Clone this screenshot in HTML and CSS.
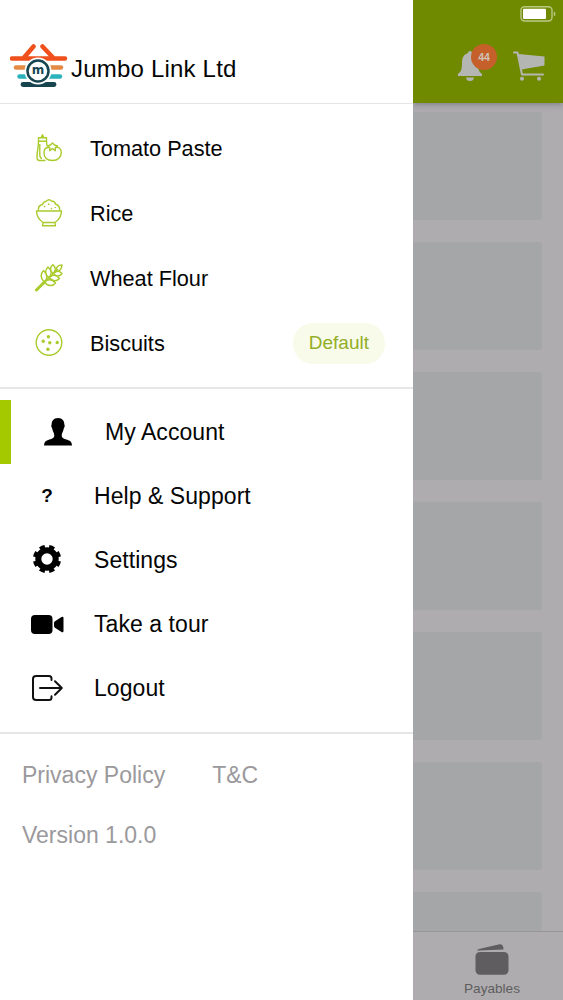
FILE: index.html
```html
<!DOCTYPE html>
<html lang="en">

<head>
    <meta charset="UTF-8">
    <meta name="viewport" content="width=device-width, initial-scale=1.0">
    <title>Jumbo Link Ltd</title>
    <link rel="stylesheet" href="styles.css">
</head>

<body>
    <div class="app">
        <!-- Side menu -->
        <aside class="drawer">
            <header class="drawer-header">
                <svg class="logo" width="58" height="46" viewBox="0 0 58 46" fill="none" stroke-linecap="round">
                    <path d="M2 15.500H55M14.500 14L23.500 3.500M42.500 14L32.500 3.500" stroke="#f0501c" stroke-width="4.500" />
                    <path d="M6 24.500H51" stroke="#e58a45" stroke-width="4.500" />
                    <path d="M9.500 33.500H50" stroke="#2bb3bd" stroke-width="4.500" />
                    <path d="M13 41.500H44" stroke="#164550" stroke-width="4.800" />
                    <circle cx="28" cy="28" r="13.500" fill="#fff" />
                    <circle cx="28" cy="28" r="10.500" fill="#fff" stroke="#164550" stroke-width="2.500" />
                    <text class="logo-letter" x="28" y="31" text-anchor="middle">m</text>
                </svg>
                <h1>Jumbo Link Ltd</h1>
            </header>

            <!-- Product categories -->
            <ul class="categories">
                <li>
                    <svg width="28" height="28" viewBox="0 0 28 28">
                        <path d="M6.300 3.500L7.500 .8L8.700 3.500M3.500 3.700H11.500V7.200H3.500ZM3.500 7.200C3.500 14 2 16 2 23.500Q2 26.500 4.500 26.500H10.500M11.500 7.200L12 12M4.800 10V21Q4.800 24 7 24.500" />
                        <path d="M14 13.500C10.500 13 9 15.500 9 18.500C9 23.500 12 26.500 17.500 26.500C23 26.500 26.300 23 26.300 18.500C26.300 14.500 23.500 13 21 13.500" />
                        <path d="M17.500 14.500L14.800 16.800V13.800L12.500 12L15.500 11L17.500 9L19.500 11L22.500 12L20.300 13.800V16.800Z" />
                    </svg>
                    <span>Tomato Paste</span>
                </li>
                <li>
                    <svg width="28" height="28" viewBox="0 0 28 28">
                        <path d="M1 12H27M1.500 12C1.500 18 4.500 21 8 23.500H20C23.500 21 26.500 18 26.500 12M8 24L7.500 26.800H20.500L20 24" />
                        <path d="M3.500 11.500C3 8 5 6 7.500 5.500C8 3 10 2.500 11.500 2C13 .5 15 .5 16.500 2C18.500 2 20 3 20.500 5C23.500 6 25 8 24.500 11.500" />
                        <path d="M9 8L10 7M13 5L14.500 5.500M16 9L17 10M20 8L20.500 9" />
                    </svg>
                    <span>Rice</span>
                </li>
                <li>
                    <svg width="28" height="28" viewBox="0 0 28 28">
                        <path class="stalk" d="M1.500 26L9.500 18" />
                        <path d="M9.500 18L23 5" />
                        <path d="M9.500 18C5 14.500 5.500 9.500 8.500 6.500C12.500 10.500 13 14.500 9.500 18ZM14 13.500C9.500 10.500 10 6 13 3C17 6.500 17 10.500 14 13.500ZM18 9.500C14.500 6.500 15 2.500 18 .7C21 3.500 21 6.500 18 9.500Z" />
                        <path d="M9.500 18C12.500 22.500 18 22.500 20.500 19C17 15 13.500 14.500 9.500 18ZM14.500 13.500C17.500 18 21.500 17.500 24.500 14.500C21 10.500 17.500 10.500 14.500 13.500ZM18.500 9.500C21.500 13 25 12.500 27 9.500C24.500 6.500 21.500 6.500 18.500 9.500Z" />
                        <path d="M21 7C20.500 3.500 23 1 27 1C27 5 24.500 7.500 21 7Z" />
                    </svg>
                    <span>Wheat Flour</span>
                </li>
                <li>
                    <svg width="28" height="28" viewBox="0 0 28 28">
                        <circle cx="14" cy="13.500" r="12.800" />
                        <g class="chips">
                            <circle cx="13.400" cy="7.800" r="1.700" />
                            <circle cx="8.200" cy="12.300" r="1.700" />
                            <circle cx="14.800" cy="13.800" r="1.700" />
                            <circle cx="22.200" cy="13.500" r="1.700" />
                            <circle cx="12.900" cy="20.300" r="1.700" />
                        </g>
                    </svg>
                    <span>Biscuits</span>
                    <span class="default-tag">Default</span>
                </li>
            </ul>

            <!-- Account links -->
            <nav class="menu">
                <a class="menu-item active">
                    <svg width="34" height="34" viewBox="0 0 34 34">
                        <path d="M17 3C12.500 3 10.500 6 10.700 9.500C10 9.800 10.100 12 11.300 13.700C11.700 16.500 13.300 18 13.300 20.500C13.300 24 9 24 6 25.500C3.800 26.500 3.200 28 3 30.500H31C30.800 28 30.200 26.500 28 25.500C25 24 20.700 24 20.700 20.500C20.700 18 22.300 16.500 22.700 13.700C23.900 12 24 9.800 23.300 9.500C23.500 6 21.500 3 17 3Z" />
                    </svg>
                    <span class="label">My Account</span>
                </a>
                <a class="menu-item">
                    <span class="question">?</span>
                    <span class="label">Help &amp; Support</span>
                </a>
                <a class="menu-item">
                    <svg width="34" height="34" viewBox="0 0 34 34">
                        <circle class="gear-ring" cx="17" cy="16" r="8.700" />
                        <circle class="gear-teeth" cx="17" cy="16" r="12.300" pathLength="16" />
                    </svg>
                    <span class="label">Settings</span>
                </a>
                <a class="menu-item">
                    <svg width="34" height="34" viewBox="0 0 34 34">
                        <rect x="1" y="8" width="21.500" height="19" rx="4" />
                        <path d="M24 16Q24 15 25 14.300L31.500 10Q33.500 9 33.500 11V24Q33.500 26 31.500 25L25 20.700Q24 20 24 19Z" />
                    </svg>
                    <span class="label">Take a tour</span>
                </a>
                <a class="menu-item">
                    <svg class="outline" width="34" height="34" viewBox="0 0 34 34">
                        <path d="M21.500 9V7.500Q21.500 5 19 5H6Q3 5 3 8V26Q3 29 6 29H19Q21.500 29 21.500 26.500V25.300M10 17H31.500M25 10.300L31.800 17L25 23.700" />
                    </svg>
                    <span class="label">Logout</span>
                </a>
            </nav>

            <footer class="drawer-footer">
                <div class="legal">
                    <a>Privacy Policy</a>
                    <a>T&amp;C</a>
                </div>
                <div>Version 1.0.0</div>
            </footer>
        </aside>

        <!-- Dimmed page behind the menu -->
        <main class="page">
            <header class="topbar">
                <div class="status">
                    <svg width="36" height="16" viewBox="0 0 36 16">
                        <rect x="1" y=".7" width="31" height="14.300" rx="3.500" fill="none" stroke="#b9c982" stroke-width="1.400" />
                        <rect x="3" y="2.800" width="23" height="10.200" rx="1" fill="#fff" />
                        <path d="M33.800 5.500Q35.500 6 35.500 7.900T33.800 10.300Z" fill="#b9c982" />
                    </svg>
                </div>
                <div class="actions">
                    <div class="bell">
                        <svg width="24" height="30" viewBox="0 0 24 30">
                            <path d="M12 0Q14 0 14 2C19 3.500 20 7 20 12C20 19 21 20.500 24 23V25H0V23C3 20.500 4 19 4 12C4 7 5.500 3.500 10 2Q10 0 12 0ZM8 26.500H16Q15.500 30 12 30T8 26.500Z" />
                        </svg>
                        <span class="badge">44</span>
                    </div>
                    <svg width="32" height="30" viewBox="0 0 32 30">
                        <path d="M5.500 3L31.500 5.500V14.500L8.500 18.500Z" />
                        <path class="cart-line" d="M1 1.500H4.500L9 23.500H30" />
                        <circle cx="9" cy="27.800" r="2" />
                        <circle cx="26" cy="27.800" r="2" />
                    </svg>
                </div>
            </header>
            <div class="cards">
                <div class="card"></div>
                <div class="card"></div>
                <div class="card"></div>
                <div class="card"></div>
                <div class="card"></div>
                <div class="card"></div>
                <div class="card"></div>
            </div>
            <div class="tabbar">
                <svg width="34" height="31" viewBox="0 0 34 31">
                    <path d="M2 6.500Q2 5.500 4 5L23.500 .5Q28.500 -.5 28.500 5.500L5 6.500Z" />
                    <rect x=".5" y="8" width="33" height="22.700" rx="4.500" />
                </svg>
                <span>Payables</span>
            </div>
        </main>
    </div>
</body>

</html>
```
FILE: styles.css
```css
* {
    box-sizing: border-box;
}

body {
    margin: 0;
    font-family: "Liberation Sans", Arial, sans-serif;
    color: #050505;
    background-color: #fff;
}

svg {
    display: block;
    flex: none;
}

.app {
    display: flex;
    height: 1000px;
    overflow: hidden;
}

/* Side menu */
.drawer {
    width: 413px;
    flex: none;
    z-index: 2;
    background-color: #fff;
}

.drawer-header {
    display: flex;
    align-items: center;
    gap: 3px;
    height: 104px;
    padding: 34px 0 0 10px;
    border-bottom: 1px solid #e6e6e6;
}

.logo {
    margin-top: -6px;
}

.logo-letter {
    font: bold 12px "DejaVu Sans", sans-serif;
    fill: #164550;
}

h1 {
    margin: 0;
    font-size: 24px;
    font-weight: normal;
    letter-spacing: 0.2px;
}

.categories {
    list-style: none;
    margin: 0;
    padding: 12px 28px 11px 35px;
    border-bottom: 2px solid #e6e6e6;
}

.categories li {
    display: flex;
    align-items: center;
    gap: 27px;
    height: 65px;
    font-size: 21.7px;
}

.categories svg {
    margin-top: -1px;
    fill: none;
    stroke: #a9cb2c;
    stroke-width: 1.4;
    stroke-linejoin: round;
}

.categories .stalk {
    stroke-width: 3;
    stroke-linecap: round;
}

.categories .chips {
    fill: #a9cb2c;
    stroke: none;
}

.default-tag {
    margin-left: auto;
    padding: 9px 16px 10px;
    border-radius: 20px;
    background-color: #f9fbea;
    color: #92ae27;
    font-size: 19px;
}

.menu {
    padding: 11px 0 12px;
    border-bottom: 2px solid #e6e6e6;
}

.menu-item {
    display: flex;
    align-items: center;
    gap: 30px;
    height: 64px;
    padding-left: 30px;
    font-size: 23px;
}

.menu-item.active {
    border-left: 11px solid #a4c900;
}

.menu-item .label {
    padding-top: 1px;
    letter-spacing: 0.06px;
}

.menu-item .outline {
    fill: none;
    stroke: #111;
    stroke-width: 2;
    stroke-linecap: round;
    stroke-linejoin: round;
}

.question {
    width: 34px;
    text-align: center;
    font-size: 19px;
    font-weight: bold;
}

.gear-ring {
    fill: none;
    stroke: #000;
    stroke-width: 6;
}

/* Eight teeth, the first one centred at 22.5deg */
.gear-teeth {
    fill: none;
    stroke: #000;
    stroke-width: 3.6;
    stroke-dasharray: 1.1 0.9;
    stroke-dashoffset: -0.45;
}

.drawer-footer {
    padding: 28px 22px;
    color: #9b999c;
    font-size: 23px;
    line-height: 26px;
}

.legal {
    display: flex;
    gap: 47px;
    margin-bottom: 34px;
}

/* Page behind the menu */
.page {
    display: flex;
    flex-direction: column;
    flex: 1;
    background-color: #aeacae;
}

.topbar {
    flex: none;
    height: 103px;
    background-color: #708a00;
    box-shadow: 0 1px 6px rgba(70, 75, 90, 0.5);
    z-index: 1;
}

.status {
    display: flex;
    justify-content: flex-end;
    padding: 6px 7px 0 0;
}

.actions {
    display: flex;
    justify-content: flex-end;
    gap: 31px;
    padding: 29px 18px 0 0;
    fill: #b4b6b4;
}

.bell {
    position: relative;
}

.badge {
    position: absolute;
    left: 13px;
    top: -7px;
    width: 26px;
    height: 26px;
    border-radius: 50%;
    background-color: #c5602b;
    color: #cfc3bb;
    font-size: 10.5px;
    font-weight: bold;
    line-height: 27px;
    text-align: center;
}

.cart-line {
    fill: none;
    stroke: #b4b6b4;
    stroke-width: 2;
    stroke-linecap: round;
    stroke-linejoin: round;
}

.cards {
    display: flex;
    flex-direction: column;
    gap: 22px;
    flex: 1;
    min-height: 0;
    padding: 9px 21px 0 0;
    overflow: hidden;
}

.card {
    flex: none;
    height: 108px;
    border-radius: 0 3px 3px 0;
    background-color: #a4a6a7;
}

.tabbar {
    display: flex;
    flex-direction: column;
    align-items: center;
    gap: 6px;
    flex: none;
    height: 69px;
    padding: 12px 0 0 8px;
    border-top: 1px solid #979597;
    color: #5f5d60;
    fill: #5f5d60;
    font-size: 13.6px;
}
```
